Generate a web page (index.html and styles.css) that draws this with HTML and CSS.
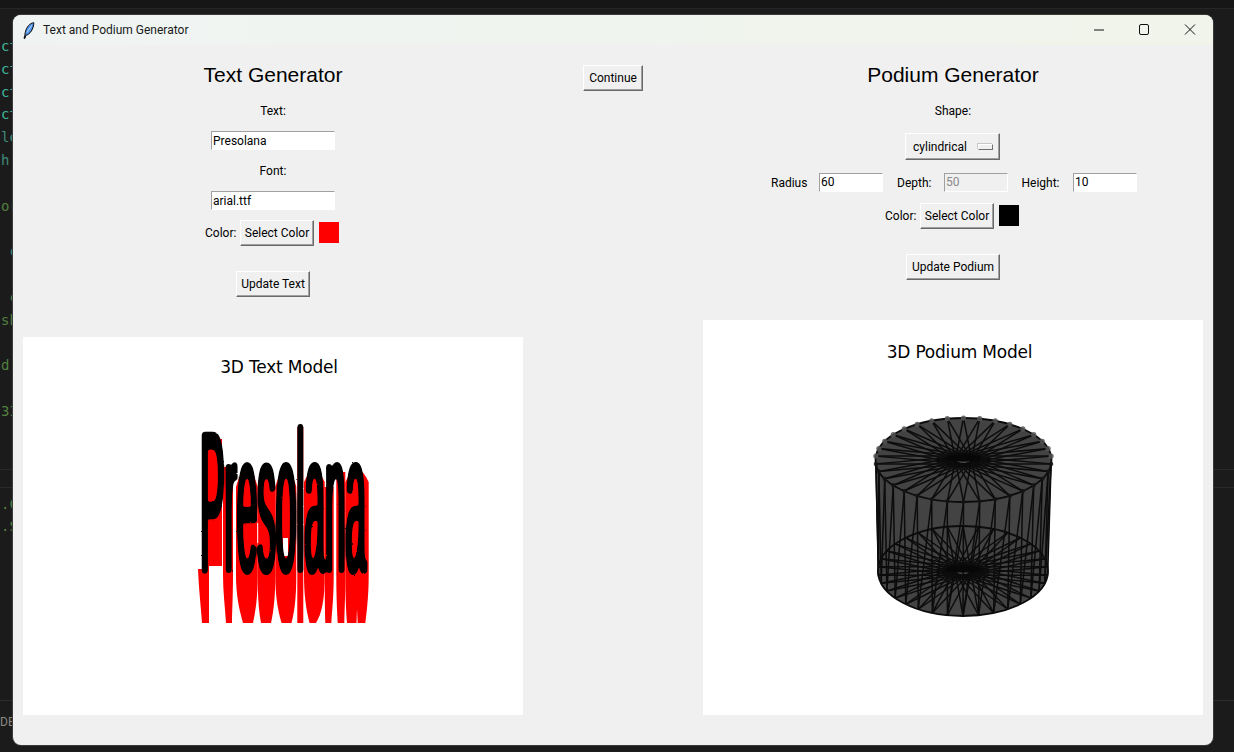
FILE: index.html
```html
<!DOCTYPE html>
<html lang="en">
<head>
<meta charset="utf-8">
<title>Text and Podium Generator</title>
<link rel="stylesheet" href="styles.css">
</head>
<body>
<div class="desktop">
  <div class="topbar"></div>
  <div class="code">
    <div class="ln teal">ct</div><div class="ln teal">ct</div><div class="ln teal">ct</div><div class="ln teal">ct</div>
    <div class="ln teal2">le</div><div class="ln teal2">h</div><div class="ln"></div><div class="ln green">or</div>
    <div class="ln"></div><div class="ln teal2">&nbsp;c</div><div class="ln"></div><div class="ln green">&nbsp;c</div>
    <div class="ln green">sh</div><div class="ln"></div><div class="ln green">d:</div><div class="ln"></div><div class="ln green">3I</div>
  </div>
  <div class="term">
    <div class="term-head"></div>
    <div class="ln green">.C</div>
    <div class="ln green">.S</div>
  </div>
  <div class="status">DE</div>
</div>

<main class="window">
  <header class="titlebar">
    <svg class="feather" width="12" height="17" viewBox="0 0 12 17"><path d="M10.800 .7C7 1 3.200 5 2.200 10.800L1.800 13.300 1 16.300l.9.200L2.800 13.300C7 12.800 10.800 6.500 10.800 .7Z" fill="#4f93e8" stroke="#0c0c0c" stroke-width="1"/><path d="M8.800 3.200 4 10.500" stroke="#d5e8ff" stroke-width=".8"/></svg>
    <span class="wintitle">Text and Podium Generator</span>
    <div class="caps">
      <svg class="cap" width="46" height="30" viewBox="0 0 46 30"><path d="M19 15h10" stroke="#111" fill="none"/></svg>
      <svg class="cap" width="46" height="30" viewBox="0 0 46 30"><rect x="18.500" y="9.500" width="9" height="10" rx="1.500" stroke="#111" fill="none"/></svg>
      <svg class="cap" width="46" height="30" viewBox="0 0 46 30"><path d="M18 9.500l10 10M28 9.500 18 19.500" stroke="#111" fill="none"/></svg>
    </div>
  </header>
  <div class="content">
    <section class="panel panel-text">
      <h1 class="h">Text Generator</h1>
      <div class="lbl lbl-first">Text:</div>
      <div class="entry entry-wide">Presolana</div>
      <div class="lbl lbl-next">Font:</div>
      <div class="entry entry-wide">arial.ttf</div>
      <div class="colorrow colorrow-text">
        <span class="lbl-inline lbl-color">Color:</span>
        <button class="btn btn-select">Select Color</button>
        <span class="swatch swatch-red"></span>
      </div>
      <button class="btn btn-update">Update Text</button>
      <div class="plot plot-text">
        <svg width="500" height="378" viewBox="0 0 500 378">
          <defs>
            <filter id="grow" x="-10%" y="-10%" width="120%" height="120%" color-interpolation-filters="sRGB">
              <feGaussianBlur stdDeviation="1.600" result="soft"/>
              <feComponentTransfer in="soft" result="fat">
                <feFuncA type="linear" slope="6" intercept="-0.600"/>
              </feComponentTransfer>
              <feTurbulence type="fractalNoise" baseFrequency="0.450" numOctaves="1" seed="4" result="grain"/>
              <feDisplacementMap in="fat" in2="grain" scale="2"/>
            </filter>
          </defs>
          <text class="plot-title" x="256" y="36" text-anchor="middle">3D Text Model</text>
          <g fill="#ff0000">
            <path d="M182 102H199V229H186V238H182Z"/>
            <path d="M175 232H186C186 255 186 270 186 286H179C178 270 176 255 175 232Z"/>
            <path d="M200 130H210V238C210 260 209 275 209 286H203C202 270 200 255 200 238Z"/>
            <path d="M213 238V150Q224 112 234.700 150V238C234.700 258 233 272 230 286H220C216 272 213 258 213 238Z"/>
            <path d="M234.700 238V150Q243 112 252.300 150V238C252.300 258 251 272 248 286H238C235.500 272 234.700 258 234.700 238Z"/>
            <path d="M252.300 238V150Q263 112 273.300 150V238C273.300 258 272 272 268.500 286H258.500C254.500 272 252.300 258 252.300 238Z"/>
            <path d="M274.300 90H280.300V286H274.300Z"/>
            <path d="M281 238V145Q291 122 301.700 145V238C301.700 262 299 276 293 286H286.500C283 272 281 258 281 238Z"/>
            <path d="M301.700 238V150H310.700V238C310.700 260 309 275 308.300 286H302.300C302 272 301.700 258 301.700 238Z"/>
            <path d="M313.300 238V135H322.300V238C322.300 260 321.500 275 321.300 286H314.700C314 272 313.300 258 313.300 238Z"/>
            <path d="M322.300 238V145Q334 120 345.700 145V238C345.700 258 344 272 342.300 286H334.700L334 272 333.500 286H324C323 272 322.300 258 322.300 238Z"/>
          </g>
          <path class="gap" d="M260 201h5v18h-5ZM234.200 186h1v20h-1Z"/>
          <g class="grown">
            <text class="word" transform="translate(177 235) scale(1 5.470)" textLength="166">Presolana</text>
          </g>
        </svg>
      </div>
    </section>

    <section class="panel panel-mid">
      <button class="btn btn-continue">Continue</button>
    </section>

    <section class="panel panel-podium">
      <h1 class="h">Podium Generator</h1>
      <div class="lbl lbl-first">Shape:</div>
      <button class="btn btn-option"><span class="opt-text">cylindrical</span><i class="optmark"></i></button>
      <div class="dims">
        <span class="lbl-inline dim-radius">Radius</span>
        <div class="entry entry-small">60</div>
        <span class="lbl-inline dim-depth">Depth:</span>
        <div class="entry entry-small entry-off">50</div>
        <span class="lbl-inline dim-height">Height:</span>
        <div class="entry entry-small">10</div>
      </div>
      <div class="colorrow colorrow-podium">
        <span class="lbl-inline lbl-color">Color:</span>
        <button class="btn btn-select">Select Color</button>
        <span class="swatch swatch-black"></span>
      </div>
      <button class="btn btn-update btn-update-p">Update Podium</button>
      <div class="plot plot-podium">
        <svg id="podium" width="500" height="395" viewBox="0 0 500 395">
          <text class="plot-title" x="256.500" y="38" text-anchor="middle">3D Podium Model</text>
        </svg>
      </div>
    </section>
  </div>
</main>
<script src="podium.js"></script>
</body>
</html>
```
FILE: styles.css
```css
* { box-sizing: border-box; }
html, body { margin: 0; height: 100%; }
body { background: #1b1b1b; overflow: hidden; position: relative; width: 1234px; height: 752px; font-family: Roboto, sans-serif; }

.desktop { width: 1234px; height: 752px; display: flex; flex-direction: column; }
.topbar { height: 9px; background: #161616; border-bottom: 1px solid #262626; flex: none; }
.code { height: 460px; padding-top: 26px; flex: none; overflow: hidden; font: 14px/22.800px "DejaVu Sans Mono", monospace; }
.ln { height: 22.800px; padding-left: 1px; white-space: pre; }
.teal { color: #3fb59a; }
.teal2 { color: #3f8a78; }
.green { color: #52803f; }
.term { height: 231px; flex: none; border-top: 1px solid #2a2a2a; font: 14px/22px "DejaVu Sans Mono", monospace; }
.term-head { height: 18px; border-bottom: 1px solid #2a2a2a; margin-bottom: 5px; }
.term .ln { height: 22px; }
.status { flex: 1; border-top: 1px solid #2c2c2c; font-size: 12px; line-height: 43px; color: #8a8a80; }

.window { position: absolute; left: 13px; top: 15px; width: 1200px; height: 730px; border-radius: 8px; background: #f0f0f0; overflow: hidden; display: flex; flex-direction: column; box-shadow: 0 0 0 1px #3a3a3a; }
.titlebar { height: 30px; flex: none; background: linear-gradient(90deg, #eff4f3, #f1f4ea); display: flex; align-items: center; padding-left: 10px; font-size: 12px; color: #1a1a1a; }
.feather { flex: none; margin-right: 8px; }
.wintitle { flex: 1; }
.caps { display: flex; }
.cap { display: block; flex: none; }

.content { flex: 1; display: grid; grid-template-columns: 500px 180px 500px; padding: 0 10px 30px; }
.panel { display: flex; flex-direction: column; align-items: center; height: 670px; }
.panel-mid { padding-top: 20px; }
.h { margin: 16px 0 0; font: 400 21px/28px "Liberation Sans", Arial, sans-serif; color: #000; height: 28px; }

.lbl { font-size: 12px; line-height: 16px; height: 16px; color: #000; }
.lbl-first { margin-top: 14px; }
.lbl-next { margin-top: 13px; }
.lbl-inline { font-size: 12px; line-height: 16px; color: #000; }

.entry { background: #fff; height: 19px; font-size: 12px; line-height: 17px; padding-left: 1px; border: 1px solid; border-color: #a0a0a0 #fff #fff #a0a0a0; color: #000; }
.entry-wide { width: 124px; margin-top: 12px; line-height: 18px; }
.entry-small { width: 64px; }
.entry-off { background: #f0f0f0; color: #8a8a8a; }

.btn { display: block; padding: 0; font: 12px/16px Roboto, sans-serif; color: #000; background: #f0f0f0; border: 1px solid; border-color: #fff #696969 #696969 #fff; box-shadow: inset -1px -1px 0 #a0a0a0; height: 26px; }
.btn-select { width: 74px; }
.btn-update { width: 74px; margin-top: 25px; }
.btn-update-p { width: 94px; }
.btn-continue { width: 60px; }
.btn-option { width: 95px; height: 27px; margin-top: 14px; margin-right: 1px; display: flex; align-items: center; padding-left: 7px; }
.opt-text { width: 65px; text-align: left; }
.optmark { display: block; width: 15px; height: 6px; background: #f0f0f0; border: 1px solid; border-color: #fff #707070 #707070 #fff; box-shadow: -1px -1px 0 #c8c8c8; margin-top: 1px; }

.colorrow { display: flex; align-items: flex-start; width: 134px; margin-right: 2px; }
.colorrow-text { margin-top: 10px; }
.colorrow-podium { margin-top: 11px; }
.lbl-color { width: 33px; flex: none; margin-top: 5px; }
.colorrow .btn-select { margin-left: 2px; flex: none; }
.swatch { display: block; width: 20px; height: 21px; margin-left: 5px; margin-top: 2px; flex: none; }
.swatch-red { background: #ff0000; }
.swatch-black { background: #000; }

.dims { display: flex; align-items: center; margin-top: 13px; height: 19px; margin-left: 2px; }
.dim-radius { width: 35px; margin-right: 13px; text-align: center; }
.dim-depth { width: 34px; margin-left: 14px; margin-right: 13px; text-align: center; }
.dim-height { width: 39px; margin-left: 13px; margin-right: 13px; text-align: center; }

.plot { background: #fff; width: 500px; margin-top: auto; flex: none; }
.plot svg { display: block; }
.plot-text { height: 378px; }
.plot-podium { height: 395px; }
.plot-title { font: 17px "DejaVu Sans", sans-serif; letter-spacing: -0.200px; fill: #000; }

.gap { fill: #fff; }
.grown { filter: url(#grow); }
.word { font: 37px "Liberation Sans", Arial, sans-serif; fill: #000; }
```
FILE: podium.js
```js
(function () {
  var svg = document.getElementById('podium');
  var NS = 'http://www.w3.org/2000/svg';
  var N = 34;
  var ox = 703, oy = 320;
  var top = { x: 963.5 - ox, y: 460 - oy, rx: 88, ry: 42 };
  var bot = { x: 963 - ox, y: 571 - oy, rx: 85, ry: 45 };

  function pt(e, i) {
    var a = (i / N) * Math.PI * 2;
    return [e.x + e.rx * Math.cos(a), e.y + e.ry * Math.sin(a)];
  }
  function add(tag, attrs) {
    var el = document.createElementNS(NS, tag);
    for (var k in attrs) el.setAttribute(k, attrs[k]);
    svg.appendChild(el);
    return el;
  }
  function line(a, b, w) {
    add('line', { x1: a[0], y1: a[1], x2: b[0], y2: b[1], stroke: '#0c0c0c', 'stroke-width': w });
  }

  var body = 'M' + (top.x - top.rx) + ' ' + top.y +
    'A' + top.rx + ' ' + top.ry + ' 0 0 1 ' + (top.x + top.rx) + ' ' + top.y +
    'L' + (bot.x + bot.rx) + ' ' + bot.y +
    'A' + bot.rx + ' ' + bot.ry + ' 0 0 1 ' + (bot.x - bot.rx) + ' ' + bot.y + 'Z';
  add('path', { d: body, fill: '#434343' });

  var i;
  // wall triangles on the near side: a zigzag between the two rims
  for (i = 0; i < N / 2; i++) {
    line(pt(top, i + 0.5), pt(bot, i + 0.5), 1.5);
    line(pt(top, i + 0.5), pt(bot, i + 1.5), 1.5);
  }
  // cap triangulation: chords that pass close to the centre
  [bot, top].forEach(function (e) {
    for (i = 0; i < N; i++) {
      line(pt(e, i + 0.5), pt(e, i + 1.5 + N / 2), 1.5);
    }
    add('ellipse', { cx: e.x, cy: e.y, rx: e.rx, ry: e.ry, fill: 'none', stroke: '#0c0c0c', 'stroke-width': 1.8 });
    add('ellipse', { cx: e.x, cy: e.y - 2, rx: 18, ry: 3.5, fill: '#070707' });
  });

  // vertex markers on the upper rim
  for (i = 0; i < N; i++) {
    var p = pt(top, i + 0.5);
    var back = p[1] < top.y;
    add('circle', { cx: p[0], cy: p[1], r: back ? 2.6 : 2.2, fill: back ? '#555' : '#151515', opacity: 0.85 });
  }
})();
```
